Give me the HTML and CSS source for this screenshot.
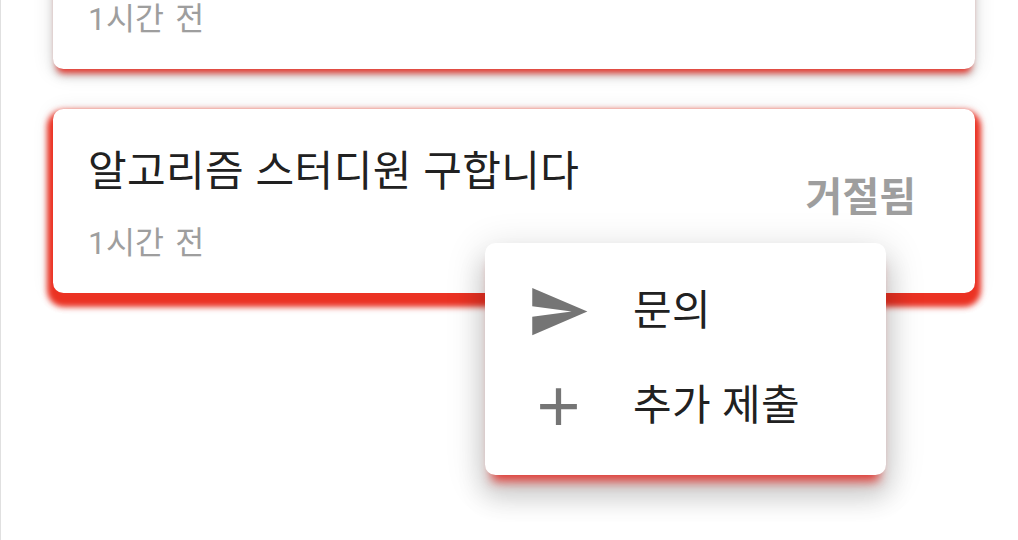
FILE: index.html
```html
<!DOCTYPE html>
<html lang="ko">
<head>
<meta charset="utf-8">
<title>스터디</title>
<link rel="stylesheet" href="styles.css">
</head>
<body>
<main class="list">
  <article class="card card-partial">
    <p class="time">1시간 전</p>
  </article>
  <article class="card card-active">
    <div class="card-body">
      <h2 class="title">알고리즘 스터디원 구합니다</h2>
      <p class="time">1시간 전</p>
    </div>
    <strong class="status">거절됨</strong>
  </article>
</main>
<ul class="menu">
  <li class="menu-item">
    <svg class="icon" viewBox="0 0 24 24"><path d="M2.01 21 23 12 2.01 3 2 10l15 2-15 2z"/></svg>
    <span class="menu-label">문의</span>
  </li>
  <li class="menu-item">
    <svg class="icon" viewBox="0 0 24 24"><path d="M19 13h-6v6h-2v-6H5v-2h6V5h2v6h6z"/></svg>
    <span class="menu-label">추가 제출</span>
  </li>
</ul>
</body>
</html>
```
FILE: styles.css
```css
* {
  box-sizing: border-box;
  margin: 0;
  padding: 0;
}

body {
  position: relative;
  height: 540px;
  overflow: hidden;
  background: #fff;
  border-left: 1px solid #e0e0e0;
  color: #212121;
  font-family: Roboto, "Noto Sans CJK KR", sans-serif;
}

.list {
  display: flex;
  flex-direction: column;
  gap: 40px;
  width: 922px;
  margin: -115px 0 0 52px;
}

.card {
  display: flex;
  flex: none;
  align-items: center;
  justify-content: space-between;
  height: 184px;
  padding: 0 59px 0 35px;
  border-radius: 10.5px;
  background: #fff;
  box-shadow:
    0 8px 6px -4px #e5392f,
    0 8px 10px 0 rgba(0, 0, 0, 0.14),
    0 3px 21px 0 rgba(0, 0, 0, 0.12);
}

.card-partial {
  align-items: flex-end;
  padding-bottom: 17px;
}

.card-active {
  box-shadow:
    0 7.5px 7px 4px #eb3223,
    0 7.5px 7px 4px #eb3223,
    0 3px 21px 0 rgba(0, 0, 0, 0.12);
}

.card-body {
  display: flex;
  flex-direction: column;
  gap: 9px;
  padding-top: 13px;
}

.title {
  font-size: 42px;
  font-weight: 400;
  line-height: 63px;
  letter-spacing: 0.4px;
  word-spacing: 0.6px;
  white-space: nowrap;
}

.time {
  color: #9e9e9e;
  font-size: 31.5px;
  line-height: 64px;
  letter-spacing: 0.2px;
  word-spacing: 3px;
  white-space: nowrap;
}

.status {
  padding-bottom: 6px;
  color: #9e9e9e;
  font-size: 40px;
  font-weight: 700;
  line-height: 60px;
}

.menu {
  position: absolute;
  top: 243px;
  left: 484px;
  width: 400.5px;
  height: 232px;
  padding: 21px 42px;
  border-radius: 10.5px;
  background: #fff;
  list-style: none;
  box-shadow:
    0 13px 11px -7px #e23a34,
    0 21px 26px 3px rgba(0, 0, 0, 0.14),
    0 8px 37px 5px rgba(0, 0, 0, 0.12);
}

.menu-item {
  display: flex;
  align-items: center;
  gap: 43px;
  height: 95px;
  font-size: 42px;
  line-height: 63px;
  letter-spacing: 0.4px;
  white-space: nowrap;
}

.menu-label {
  padding-bottom: 3px;
}

.icon {
  flex: none;
  width: 63px;
  height: 63px;
  fill: #757575;
}
```
